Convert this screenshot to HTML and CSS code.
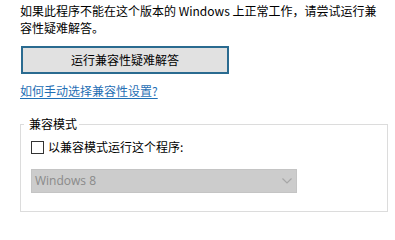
FILE: index.html
```html
<!DOCTYPE html>
<html lang="zh-CN">
<head>
<meta charset="utf-8">
<title>兼容性</title>
<link rel="stylesheet" href="styles.css">
</head>
<body>
<div class="page">
  <p class="intro">如果此程序不能在这个版本的 Windows 上正常工作，请尝试运行兼<br>容性疑难解答。</p>
  <button class="btn" type="button">运行兼容性疑难解答</button>
  <a class="link" href="#">如何手动选择兼容性设置?</a>
  <fieldset class="group">
    <legend class="legend">兼容模式</legend>
    <label class="check-row">
      <span class="checkbox"></span>
      <span class="check-label">以兼容模式运行这个程序:</span>
    </label>
    <div class="select">
      <span class="select-text">Windows 8</span>
      <svg class="chevron" width="10" height="6" viewBox="0 0 10 6">
        <path d="M0.5 0.5 L5 5 L9.5 0.5" fill="none" stroke="#a6a6a6" stroke-width="1.2"/>
      </svg>
    </div>
  </fieldset>
</div>
</body>
</html>
```

FILE: styles.css
```css
html, body {
  margin: 0;
  padding: 0;
  background: #ffffff;
}

body {
  width: 395px;
  height: 218px;
  overflow: hidden;
  font-family: "Noto Sans CJK SC", "Noto Sans", sans-serif;
  font-size: 12px;
  line-height: 16px;
  color: #000000;
}

.page {
  padding: 3px 0 0 20px;
  display: flex;
  flex-direction: column;
  align-items: flex-start;
}

.intro {
  margin: 0;
  line-height: 16.5px;
}

.btn {
  margin: 10px 0 0 1px;
  width: 208px;
  height: 28px;
  box-sizing: border-box;
  border: 2px solid #2a6b90;
  background: #e1e1e1;
  font-family: inherit;
  font-size: 12px;
  line-height: 16px;
  color: #000000;
  padding: 0;
}

.link {
  margin-top: 9px;
  color: #1f6fb5;
  text-decoration: underline;
  text-underline-offset: 2px;
}

.group {
  margin: 17px 0 0 0;
  width: 368px;
  box-sizing: border-box;
  border: 1px solid #dcdcdc;
  padding: 0 0 18px 10px;
}

.legend {
  margin-left: -7px;
  padding: 0 2px 0 5px;
  line-height: 16px;
}

.check-row {
  margin-top: 7px;
  display: flex;
  align-items: center;
  gap: 4px;
  height: 16px;
}

.checkbox {
  width: 13px;
  height: 13px;
  box-sizing: border-box;
  border: 1px solid #333333;
  background: #ffffff;
}

.select {
  margin-top: 14px;
  width: 266px;
  height: 24px;
  box-sizing: border-box;
  border: 1px solid #c4c4c4;
  background: #cccccc;
  display: flex;
  align-items: center;
  justify-content: space-between;
  padding: 0 4px 0 3px;
}

.select-text {
  color: #8a8a8a;
  font-family: "Open Sans", "Noto Sans", sans-serif;
  font-size: 12px;
}

.chevron {
  display: block;
}
```
